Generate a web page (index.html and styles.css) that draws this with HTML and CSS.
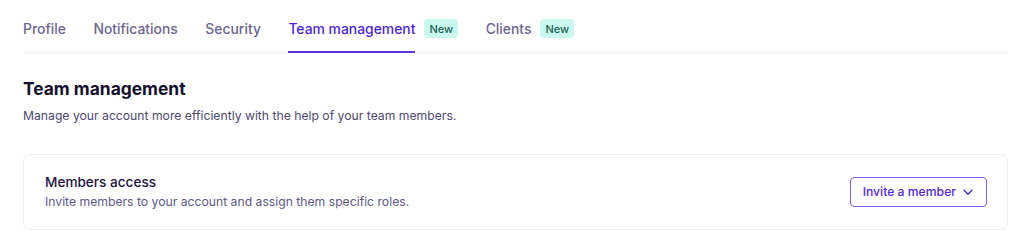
FILE: index.html
```html
<!DOCTYPE html>
<html lang="en">
<head>
<meta charset="utf-8">
<title>Team management</title>
<link rel="stylesheet" href="styles.css">
</head>
<body>
<div class="page">
  <nav class="tabs">
    <a class="tab">Profile</a>
    <a class="tab">Notifications</a>
    <a class="tab">Security</a>
    <a class="tab active"><span class="tab-label">Team management</span><span class="badge">New</span></a>
    <a class="tab"><span class="tab-label">Clients</span><span class="badge">New</span></a>
  </nav>
  <section class="intro">
    <h1 class="title">Team management</h1>
    <p class="subtitle">Manage your account more efficiently with the help of your team members.</p>
  </section>
  <div class="card">
    <div class="card-text">
      <h2 class="card-title">Members access</h2>
      <p class="card-desc">Invite members to your account and assign them specific roles.</p>
    </div>
    <button class="invite">Invite a member
      <svg class="chev" width="10" height="10" viewBox="0 0 10 10" fill="none"><path d="M1 3.2 5 7.2l4-4" stroke="currentColor" stroke-width="1.4" stroke-linecap="round" stroke-linejoin="round"/></svg>
    </button>
  </div>
</div>
</body>
</html>
```
FILE: styles.css
```css
* { box-sizing: border-box; }
html, body { margin: 0; padding: 0; background: #fff; }
body { font-family: Inter, "Noto Sans", sans-serif; -webkit-font-smoothing: antialiased; }
.page { padding: 0 16px 0 23px; }
.tabs {
  display: flex;
  gap: 27.5px;
  border-bottom: 1px solid #efeff3;
  height: 53px;
  align-items: stretch;
}
.tab {
  display: flex;
  align-items: center;
  gap: 9px;
  font-size: 13.9px;
  font-weight: 500;
  color: #6c6690;
  padding-top: 5px;
  position: relative;
}
.tab.active { color: #4c1fd6; }
.tab.active .tab-label { position: relative; align-self: stretch; display: flex; align-items: center; }
.tab.active .tab-label::after {
  content: "";
  position: absolute;
  left: 0; right: 0; bottom: -1px;
  height: 2px;
  background: #5b34e0;
}
.badge {
  display: inline-flex;
  align-items: center;
  justify-content: center;
  height: 19px;
  padding: 0 5px;
  border-radius: 4px;
  background: #c9f8ee;
  color: #1d5f56;
  font-size: 11px;
  font-weight: 500;
}
.intro { padding-top: 25px; }
.title { margin: 0; font-size: 17.4px; font-weight: 700; color: #150f2e; line-height: 22px; }
.subtitle { margin: 8px 0 0; font-size: 12.2px; color: #4e4872; line-height: 16px; }
.card {
  margin-top: 30px;
  border: 1px solid #ececf1;
  border-radius: 7px;
  height: 76px;
  display: flex;
  align-items: center;
  justify-content: space-between;
  padding: 0 20px 0 21px;
}
.card-text { margin-top: -2px; }
.card-title { margin: 0; font-size: 13.6px; font-weight: 500; color: #1e1343; line-height: 18px; }
.card-desc { margin: 3px 0 0; font-size: 12.2px; color: #5e5884; line-height: 16px; }
.invite {
  display: flex;
  align-items: center;
  gap: 7px;
  height: 30px;
  margin-top: -1px;
  padding: 0 13px 0 12px;
  border: 1.5px solid #7b5ce8;
  border-radius: 4px;
  background: #fff;
  color: #5328d0;
  font-family: inherit;
  font-size: 12.2px;
  font-weight: 500;
}
.chev { display: block; }
```
